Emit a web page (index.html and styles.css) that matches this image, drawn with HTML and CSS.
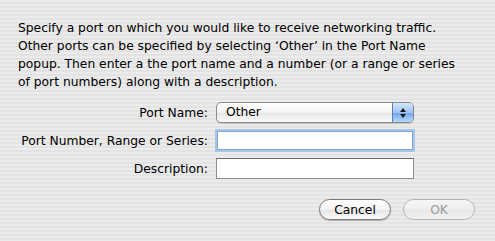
FILE: index.html
```html
<!DOCTYPE html>
<html lang="en">
<head>
    <meta charset="UTF-8">
    <title>Add Port</title>
    <link rel="stylesheet" href="styles.css">
</head>
<body>
    <div class="sheet">
        <p class="intro">Specify a port on which you would like to receive networking traffic.<br>Other ports can be specified by selecting &lsquo;Other&rsquo; in the Port Name<br>popup. Then enter a the port name and a number (or a range or series<br>of port numbers) along with a description.</p>

        <form class="fields">
            <label for="port-name">Port Name:</label>
            <div class="popup">
                <span class="popup-value">Other</span>
                <span class="popup-arrows">
                    <svg width="8" height="12" viewBox="0 0 8 12">
                        <path d="M4 1 L7 5 L1 5 Z" fill="#1a1a1a"/>
                        <path d="M4 11 L7 7 L1 7 Z" fill="#1a1a1a"/>
                    </svg>
                </span>
            </div>

            <label for="port-number">Port Number, Range or Series:</label>
            <input type="text" id="port-number" class="field focused">

            <label for="description">Description:</label>
            <input type="text" id="description" class="field">
        </form>

        <div class="buttons">
            <button type="button" class="pill">Cancel</button>
            <button type="button" class="pill disabled">OK</button>
        </div>
    </div>
</body>
</html>
```

FILE: styles.css
```css
html, body {
    margin: 0;
    height: 100%;
}

body {
    font-family: "DejaVu Sans", "Lucida Grande", sans-serif;
    font-size: 12.3px;
    color: #000;
    background: repeating-linear-gradient(to bottom, #ebebeb 0, #ebebeb 2px, #e3e3e3 2px, #e3e3e3 4px);
}

.sheet {
    padding: 19px 20px 0 18px;
}

.intro {
    margin: 0;
    line-height: 18px;
    white-space: nowrap;
}

.fields {
    display: grid;
    grid-template-columns: 190px 198px;
    column-gap: 8px;
    row-gap: 8px;
    align-items: center;
    margin-top: 11px;
}

.fields label {
    text-align: right;
    white-space: nowrap;
}

.popup {
    display: flex;
    height: 19px;
    border: 1px solid #8a8a8a;
    border-radius: 5px;
    background: linear-gradient(to bottom, #ffffff 0%, #f4f4f4 50%, #e6e6e6 51%, #fafafa 100%);
    box-shadow: 0 1px 1px rgba(0,0,0,0.15);
    overflow: hidden;
}

.popup-value {
    flex: 1;
    padding-left: 9px;
    line-height: 19px;
}

.popup-arrows {
    width: 20px;
    display: flex;
    align-items: center;
    justify-content: center;
    border-left: 1px solid #5a7fb8;
    background: linear-gradient(to bottom, #d4e6fb 0%, #9dc4f2 50%, #6fa4e8 51%, #b5d8fb 100%);
}

.field {
    box-sizing: border-box;
    width: 198px;
    height: 21px;
    margin: 0;
    border: 1px solid #8e8e8e;
    border-top-color: #6b6b6b;
    background: #fff;
    font: inherit;
}

.field.focused {
    border-color: #7fa6d6;
    box-shadow: 0 0 0 2px #a9c6ea;
    outline: none;
    height: 19px;
    width: 196px;
    margin-left: 1px;
}

.buttons {
    display: flex;
    justify-content: flex-end;
    gap: 12px;
    margin-top: 20px;
}

.pill {
    width: 72px;
    height: 21px;
    border: 1px solid #7a7a7a;
    border-radius: 11px;
    font: inherit;
    color: #000;
    padding: 0;
    background: linear-gradient(to bottom, #ffffff 0%, #f3f3f3 50%, #e4e4e4 51%, #fbfbfb 100%);
    box-shadow: 0 1px 1px rgba(0,0,0,0.25);
}

.pill.disabled {
    color: #9a9a9a;
    border-color: #b4b4b4;
    box-shadow: none;
    background: linear-gradient(to bottom, #f6f6f6 0%, #eeeeee 50%, #e6e6e6 51%, #f2f2f2 100%);
}
```
